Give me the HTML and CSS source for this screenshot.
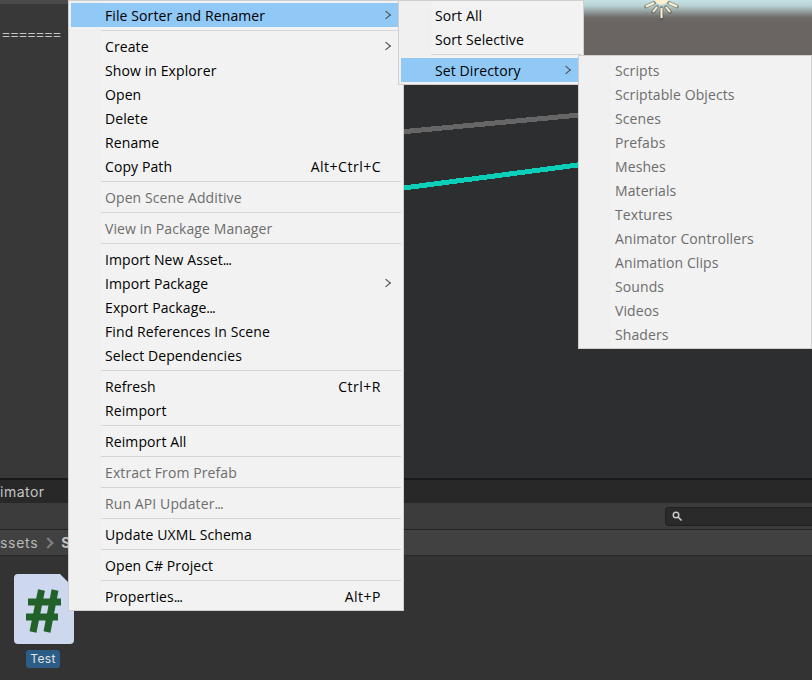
FILE: index.html
```html
<!DOCTYPE html>
<html lang="en">
	<head>
		<meta charset="utf-8" />
		<title>Asset context menu</title>
		<link rel="stylesheet" href="styles.css">
	</head>
	<body>
		<div class="editor">
			<section class="scene">
				<div class="console">=======</div>
				<div class="view">
					<div class="sky"></div>
					<svg class="gizmo-lines" width="412" height="120" viewBox="400 90 412 120" shape-rendering="crispEdges">
						<line x1="400" y1="132" x2="812" y2="93" stroke="#666" stroke-width="5"/>
						<line x1="400" y1="188.5" x2="812" y2="134" stroke="#0ccfb9" stroke-width="5"/>
					</svg>
					<svg class="sun" width="40" height="22" viewBox="0 0 40 22">
						<path d="M19.5 8v11M15 7l-4 5M24 7l4 5M12 3L4 6.5M27 3l8 3.5" stroke="#57544a" stroke-width="4" stroke-linecap="round" fill="none" opacity="0.5"/>
						<circle cx="19.5" cy="-3" r="7.5" fill="#fdf0cc"/>
						<path d="M19.5 8v10M15 7l-4 5M24 7l4 5M12 3L4 6.5M27 3l8 3.5" stroke="#fdf0cc" stroke-width="2" fill="none"/>
					</svg>
				</div>
			</section>
			<div class="tabbar">imator</div>
			<div class="toolbar"><div class="search">
				<svg width="12" height="12" viewBox="0 0 12 12"><circle cx="5" cy="5" r="2.8" fill="none" stroke="#ccc" stroke-width="1.4"/><path d="M7 7l3.5 3.5" stroke="#ccc" stroke-width="1.6"/></svg>
			</div></div>
			<div class="breadcrumb"><span>ssets</span><i class="crumb-sep"></i><b>S</b></div>
			<section class="assets">
				<div class="asset">
					<svg class="script-icon" width="60" height="70" viewBox="0 0 60 70">
						<path d="M0 4a4 4 0 0 1 4-4H46L60 14V66a4 4 0 0 1-4 4H4a4 4 0 0 1-4-4Z" fill="#cdd8ef"/>
						<path d="M14 28H47M12 43H44M27.5 16L19 58M41 16L33 58" stroke="#22622a" stroke-width="7" fill="none"/>
					</svg>
					<span class="asset-name">Test</span>
				</div>
			</section>
		</div>

		<div class="menu menu-main">
			<div class="item active has-sub">File Sorter and Renamer</div>
			<hr>
			<div class="item has-sub">Create</div>
			<div class="item">Show in Explorer</div>
			<div class="item">Open</div>
			<div class="item">Delete</div>
			<div class="item">Rename</div>
			<div class="item">Copy Path<span class="shortcut">Alt+Ctrl+C</span></div>
			<hr>
			<div class="item off">Open Scene Additive</div>
			<hr>
			<div class="item off">View in Package Manager</div>
			<hr>
			<div class="item"><span>Import New Asset<span class="dots">...</span></span></div>
			<div class="item has-sub">Import Package</div>
			<div class="item"><span>Export Package<span class="dots">...</span></span></div>
			<div class="item">Find References In Scene</div>
			<div class="item">Select Dependencies</div>
			<hr>
			<div class="item">Refresh<span class="shortcut">Ctrl+R</span></div>
			<div class="item">Reimport</div>
			<hr>
			<div class="item">Reimport All</div>
			<hr>
			<div class="item off">Extract From Prefab</div>
			<hr>
			<div class="item off"><span>Run API Updater<span class="dots">...</span></span></div>
			<hr>
			<div class="item">Update UXML Schema</div>
			<hr>
			<div class="item">Open C# Project</div>
			<hr>
			<div class="item"><span>Properties<span class="dots">...</span></span><span class="shortcut">Alt+P</span></div>
		</div>

		<div class="menu menu-sort">
			<div class="item">Sort All</div>
			<div class="item">Sort Selective</div>
			<hr>
			<div class="item active has-sub">Set Directory</div>
		</div>

		<div class="menu menu-dirs">
			<div class="item off">Scripts</div>
			<div class="item off">Scriptable Objects</div>
			<div class="item off">Scenes</div>
			<div class="item off">Prefabs</div>
			<div class="item off">Meshes</div>
			<div class="item off">Materials</div>
			<div class="item off">Textures</div>
			<div class="item off">Animator Controllers</div>
			<div class="item off">Animation Clips</div>
			<div class="item off">Sounds</div>
			<div class="item off">Videos</div>
			<div class="item off">Shaders</div>
		</div>
	</body>
</html>
```

FILE: styles.css
```css
html, body {
	margin: 0;
	padding: 0;
	width: 100%;
	height: 100%;
	overflow: hidden;
}
body {
	position: relative;
	font-family: "Open Sans", "Noto Sans", sans-serif;
	font-size: 14px;
	background-color: #333;
}
.editor {
	display: flex;
	flex-direction: column;
	height: 680px;
}
.scene {
	display: flex;
	height: 478px;
	overflow: hidden;
	border-bottom: 2px solid #191919;
	box-sizing: content-box;
}
.console {
	width: 200px;
	box-sizing: border-box;
	padding-top: 21px;
	background-color: #383838;
	border-top: 4px solid #4a4a4a;
	color: #c4c4c4;
	font-family: "Open Sans", sans-serif;
	font-size: 14px;
	letter-spacing: 0.5px;
	text-indent: 2px;
}
.view {
	position: relative;
	flex: 1;
	background: #2d2e2f;
}
.sky {
	height: 55px;
	background: linear-gradient(#c6e2e4 0, #b8d0d2 6px, #6f6d6b 17px, #6a6563 22px);
}
.gizmo-lines {
	position: absolute;
	left: 200px;
	top: 90px;
}
.sun {
	position: absolute;
	left: 442px;
	top: 0;
}
.tabbar {
	height: 23px;
	line-height: 24px;
	background-color: #282828;
	color: #c4c4c4;
	font-family: "Inter", sans-serif;
	font-size: 14px;
	letter-spacing: 0.5px;
	white-space: nowrap;
}
.toolbar {
	display: flex;
	justify-content: flex-end;
	align-items: center;
	height: 26px;
	background-color: #3c3c3c;
	border-bottom: 1px solid #232323;
}
.search {
	display: flex;
	align-items: center;
	width: 147px;
	height: 19px;
	padding-left: 5px;
	box-sizing: border-box;
	background-color: #2a2a2a;
	border: 1px solid #202020;
	border-right: 0;
	border-radius: 4px 0 0 4px;
}
.breadcrumb {
	display: flex;
	align-items: center;
	height: 25px;
	background-color: #414141;
	border-bottom: 1px solid #282828;
	color: #b8b8b8;
	font-family: "Inter", sans-serif;
	font-size: 14px;
	letter-spacing: 0.7px;
	white-space: nowrap;
}
.crumb-sep {
	width: 6px;
	height: 6px;
	margin: 0 9px 0 6px;
	border-top: 2px solid #808080;
	border-right: 2px solid #808080;
	transform: rotate(45deg);
}
.breadcrumb b {
	color: #c4c4c4;
}
.assets {
	flex: 1;
	background-color: #333;
	padding: 18px 0 0 14px;
}
.asset {
	display: flex;
	flex-direction: column;
	align-items: center;
	width: 58px;
	gap: 6px;
}
.script-icon {
	display: block;
	flex: none;
	align-self: flex-start;
}
.asset-name {
	padding: 0 4px;
	height: 18px;
	line-height: 18px;
	border-radius: 3px;
	background-color: #2c5d87;
	color: #e2e2e2;
	font-family: "Inter", sans-serif;
	font-size: 12px;
	letter-spacing: 0.3px;
}
.menu {
	position: absolute;
	box-sizing: border-box;
	padding: 2px;
	background: linear-gradient(to right, #f0f0f0 32px, #f2f2f2 32px);
	border: 1px solid #cfcfcf;
	color: #000;
	font-size: 14px;
	letter-spacing: 0.1px;
}
.menu-main {
	left: 68px;
	top: 0;
	width: 336px;
	height: 611px;
}
.menu-sort {
	left: 398px;
	top: 0;
	width: 186px;
	height: 85px;
}
.menu-dirs {
	left: 578px;
	top: 55px;
	width: 234px;
	height: 294px;
}
.item {
	position: relative;
	display: flex;
	justify-content: space-between;
	height: 24px;
	line-height: 26px;
	padding: 0 20px 0 34px;
	white-space: nowrap;
}
.active {
	background-color: #90c8f6;
}
.off {
	color: #6d6d6d;
}
.dots {
	letter-spacing: -0.9px;
}
.shortcut {
	margin-left: auto;
	letter-spacing: 0.5px;
}
.has-sub::after {
	content: "";
	position: absolute;
	right: 12px;
	top: 9px;
	width: 5px;
	height: 5px;
	border-top: 1px solid #555;
	border-right: 1px solid #555;
	transform: scaleX(1.2) rotate(45deg);
}
hr {
	height: 1px;
	margin: 3px 0 3px 30px;
	border: 0;
	background-color: #d5d5d5;
}
```
